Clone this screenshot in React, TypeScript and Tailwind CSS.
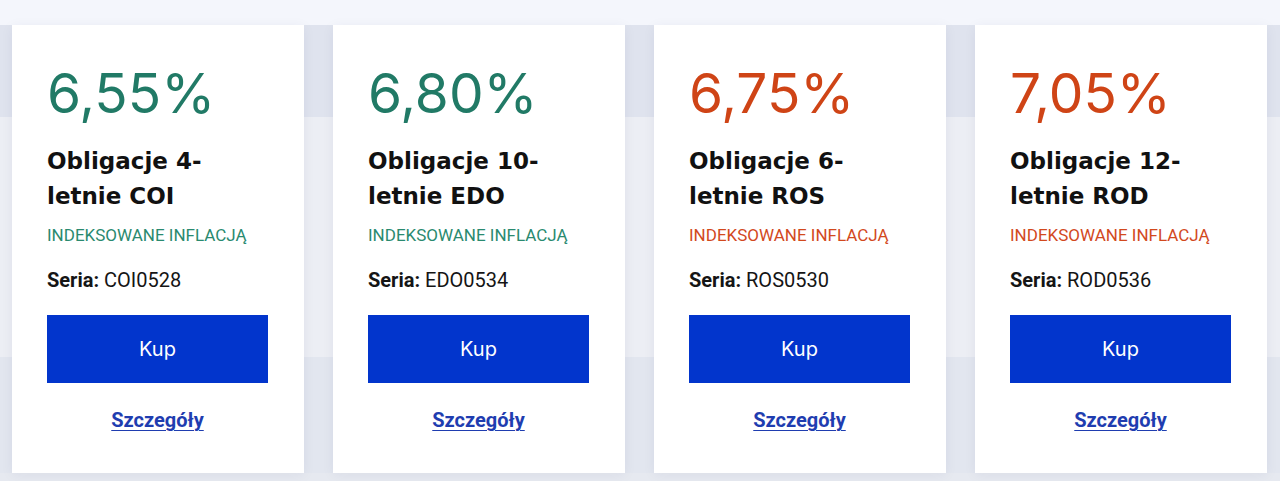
import React from "react";

type Bond = {
  rate: string;
  l1: string;
  l2: string;
  series: string;
  tone: "green" | "orange";
};

const bonds: Bond[] = [
  { rate: "6,55%", l1: "Obligacje 4-", l2: "letnie COI", series: "COI0528", tone: "green" },
  { rate: "6,80%", l1: "Obligacje 10-", l2: "letnie EDO", series: "EDO0534", tone: "green" },
  { rate: "6,75%", l1: "Obligacje 6-", l2: "letnie ROS", series: "ROS0530", tone: "orange" },
  { rate: "7,05%", l1: "Obligacje 12-", l2: "letnie ROD", series: "ROD0536", tone: "orange" },
];

function Card({ b }: { b: Bond }) {
  const rateColor = b.tone === "green" ? "text-[#217a66]" : "text-[#cf4416]";
  const tagColor = b.tone === "green" ? "text-[#2a8a6f]" : "text-[#d2491d]";
  return (
    <div className="w-[292px] shrink-0 bg-white shadow-[0_2px_12px_rgba(30,40,80,0.06)] pl-[35px] pr-[36px] pt-[38px] pb-[40px] flex flex-col">
      <div className={`${rateColor} [font-family:Inter,sans-serif] text-[55px] leading-[60px] font-normal`}>
        {b.rate}
      </div>
      <div className="mt-[21px] [font-family:'DejaVu_Sans',sans-serif] text-[23px] leading-[35px] font-bold text-[#111111]">
        <div>{b.l1}</div>
        <div>{b.l2}</div>
      </div>
      <div className={`mt-[10px] [font-family:Roboto,sans-serif] text-[17px] leading-[22px] ${tagColor}`}>
        INDEKSOWANE INFLACJĄ
      </div>
      <div className="mt-[22px] [font-family:Roboto,sans-serif] text-[20px] leading-[24px] text-[#151515]">
        <span className="font-bold">Seria:</span> {b.series}
      </div>
      <button className="mt-[23px] h-[68px] w-full bg-[#0235cc] text-white text-[20px] [font-family:Inter,sans-serif]">
        Kup
      </button>
      <div className="mt-[25px] text-center leading-[24px]">
        <a className="[font-family:Roboto,sans-serif] text-[20px] leading-[24px] font-bold text-[#1f3db0] underline underline-offset-[3px] decoration-[1px]">
          Szczegóły
        </a>
      </div>
    </div>
  );
}

export default function App() {
  return (
    <div className="w-[1280px] h-[481px] overflow-hidden bg-[linear-gradient(to_bottom,#f4f6fc_0px,#f4f6fc_25px,#dfe3ee_25px,#dfe3ee_117px,#eceef4_117px,#eceef4_357px,#e2e6ef_357px,#e2e6ef_473px,#e6e9f0_473px)]">
      <div className="flex gap-[29px] pl-[12px] pt-[25px]">
        {bonds.map((b) => (
          <Card key={b.series} b={b} />
        ))}
      </div>
    </div>
  );
}
